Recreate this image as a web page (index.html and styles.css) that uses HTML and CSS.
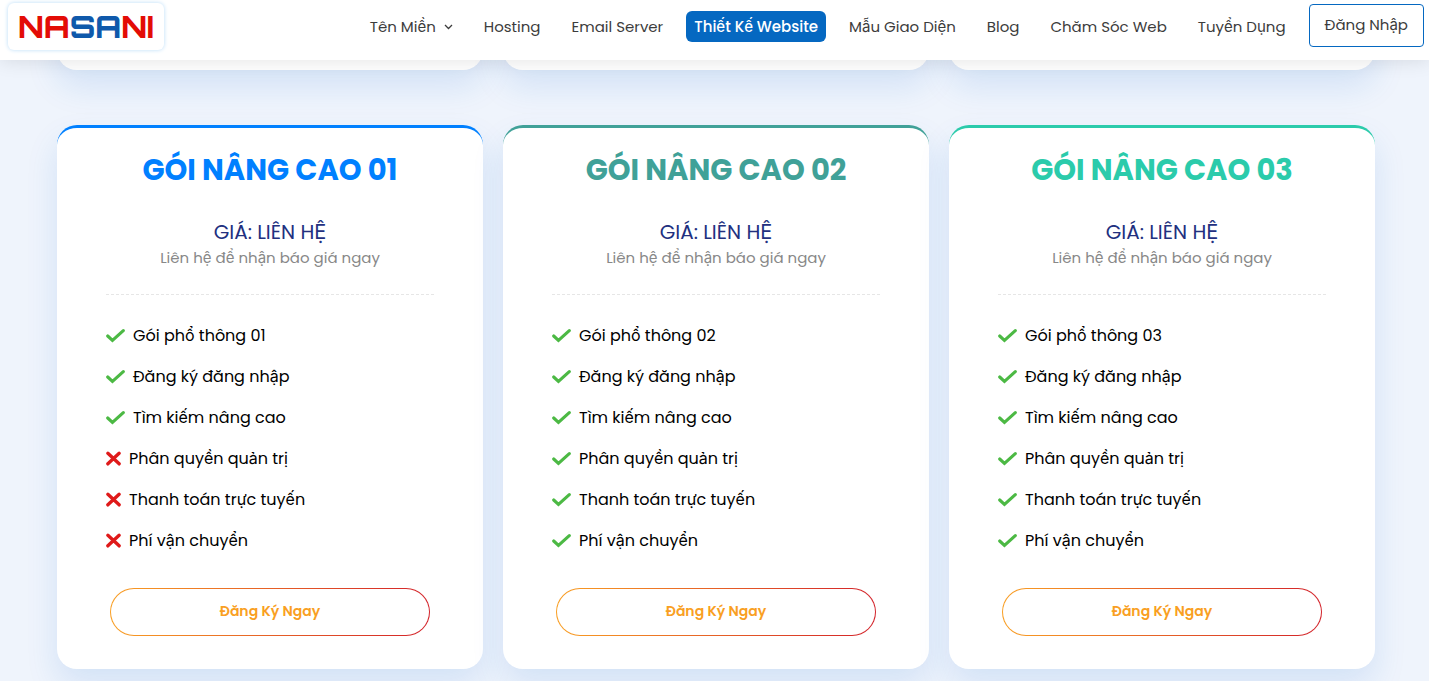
FILE: index.html
```html
<!DOCTYPE html>
<html lang="vi">
<head>
  <meta charset="UTF-8">
  <meta name="viewport" content="width=device-width, initial-scale=1.0">
  <title>Thiết Kế Website - NASANI</title>
  <link rel="stylesheet" href="styles.css">
</head>
<body>
  <svg class="sprite" aria-hidden="true">
    <symbol id="check" viewBox="0 0 20 15"><path d="M1.800 8l5 4.600L18.200 2.400" fill="none" stroke="#4cb944" stroke-width="3.300" stroke-linecap="round"/></symbol>
    <symbol id="cross" viewBox="0 0 16 15"><path d="M2 2l12 11.200M14 2L2 13.200" fill="none" stroke="#df1a1a" stroke-width="3.600" stroke-linecap="round"/></symbol>
  </svg>

  <header class="header">
    <a href="#" class="logo"><span class="red">NA</span><span class="blue">SA</span><span class="red">NI</span></a>
    <nav class="menu">
      <a href="#" class="menu-link">Tên Miền
        <svg class="arrow" viewBox="0 0 9 6"><path d="M1 1l3.500 3.500L8 1" fill="none" stroke="currentColor" stroke-width="1.300"/></svg>
      </a>
      <a href="#" class="menu-link">Hosting</a>
      <a href="#" class="menu-link">Email Server</a>
      <a href="#" class="menu-link active">Thiết Kế Website</a>
      <a href="#" class="menu-link">Mẫu Giao Diện</a>
      <a href="#" class="menu-link">Blog</a>
      <a href="#" class="menu-link">Chăm Sóc Web</a>
      <a href="#" class="menu-link">Tuyển Dụng</a>
      <a href="#" class="login">Đăng Nhập</a>
    </nav>
  </header>

  <main class="pricing">
    <div class="card-end"></div>
    <div class="card-end"></div>
    <div class="card-end"></div>

    <article class="card blue-card">
      <h2>GÓI NÂNG CAO 01</h2>
      <p class="price">GIÁ: LIÊN HỆ</p>
      <p class="note">Liên hệ để nhận báo giá ngay</p>
      <ul class="features">
        <li><svg class="check"><use href="#check"/></svg>Gói phổ thông 01</li>
        <li><svg class="check"><use href="#check"/></svg>Đăng ký đăng nhập</li>
        <li><svg class="check"><use href="#check"/></svg>Tìm kiếm nâng cao</li>
        <li><svg class="cross"><use href="#cross"/></svg>Phân quyền quản trị</li>
        <li><svg class="cross"><use href="#cross"/></svg>Thanh toán trực tuyến</li>
        <li><svg class="cross"><use href="#cross"/></svg>Phí vận chuyển</li>
      </ul>
      <a href="#" class="btn">Đăng Ký Ngay</a>
    </article>

    <article class="card teal-card">
      <h2>GÓI NÂNG CAO 02</h2>
      <p class="price">GIÁ: LIÊN HỆ</p>
      <p class="note">Liên hệ để nhận báo giá ngay</p>
      <ul class="features">
        <li><svg class="check"><use href="#check"/></svg>Gói phổ thông 02</li>
        <li><svg class="check"><use href="#check"/></svg>Đăng ký đăng nhập</li>
        <li><svg class="check"><use href="#check"/></svg>Tìm kiếm nâng cao</li>
        <li><svg class="check"><use href="#check"/></svg>Phân quyền quản trị</li>
        <li><svg class="check"><use href="#check"/></svg>Thanh toán trực tuyến</li>
        <li><svg class="check"><use href="#check"/></svg>Phí vận chuyển</li>
      </ul>
      <a href="#" class="btn">Đăng Ký Ngay</a>
    </article>

    <article class="card green-card">
      <h2>GÓI NÂNG CAO 03</h2>
      <p class="price">GIÁ: LIÊN HỆ</p>
      <p class="note">Liên hệ để nhận báo giá ngay</p>
      <ul class="features">
        <li><svg class="check"><use href="#check"/></svg>Gói phổ thông 03</li>
        <li><svg class="check"><use href="#check"/></svg>Đăng ký đăng nhập</li>
        <li><svg class="check"><use href="#check"/></svg>Tìm kiếm nâng cao</li>
        <li><svg class="check"><use href="#check"/></svg>Phân quyền quản trị</li>
        <li><svg class="check"><use href="#check"/></svg>Thanh toán trực tuyến</li>
        <li><svg class="check"><use href="#check"/></svg>Phí vận chuyển</li>
      </ul>
      <a href="#" class="btn">Đăng Ký Ngay</a>
    </article>
  </main>
</body>
</html>
```

FILE: styles.css
```css
*{margin:0;padding:0;box-sizing:border-box}
body{font-family:Poppins,Inter,sans-serif;font-size:16px;color:#000;background:#eff4fc}
a{text-decoration:none}
.sprite{display:none}

/* header */
.header{position:sticky;top:0;z-index:10;height:60px;display:flex;justify-content:space-between;align-items:flex-start;padding:3px 5px 0 8px;background:#fff;box-shadow:0 0 20px rgba(0,0,0,.12)}
.logo{height:47px;padding:0 10px;border-radius:6px;box-shadow:0 0 4px #b9dcf8;font-family:Orbitron,"DejaVu Sans",sans-serif;font-size:31px;font-weight:800;line-height:48px}
.red{color:#e30c06}
.blue{color:#0f59ab}
.menu{display:flex;align-items:flex-start;gap:15px;font-size:15px}
.menu-link{display:flex;align-items:center;gap:8px;height:31px;margin-top:8px;padding:0 8px;border-radius:6px;color:#3c3c3c;white-space:nowrap}
.menu-link.active{background:#0568c1;color:#fff;font-weight:500}
.arrow{width:9px;height:6px}
.login{height:43px;margin-top:1px;padding:0 15px;border:1px solid #0568c1;border-radius:4px;color:#3c3c3c;line-height:40px;white-space:nowrap}

/* pricing */
.pricing{display:grid;grid-template-columns:repeat(3,1fr);column-gap:20px;padding:0 54px 12px 57px}
.card,.card-end{background:#fff;border-radius:20px;box-shadow:0 16px 32px rgba(26,110,210,.13)}
.card-end{height:60px;margin:-50px 0 55px}
.card{padding:24px 49px 33px;border-top:3px solid;text-align:center}
.card h2{font-size:29px;line-height:36px}
.blue-card{border-color:#0080ff}
.blue-card h2{color:#0080ff}
.teal-card{border-color:#40a198}
.teal-card h2{color:#40a198}
.green-card{border-color:#2bcbab}
.green-card h2{color:#2bcbab}
.price{margin-top:29px;font-size:20px;line-height:30px;color:#22307f}
.note{padding-bottom:25px;border-bottom:1px dashed #e6e6e6;font-size:15px;line-height:22px;color:#888}
.features{list-style:none;margin:20px 0 27px;text-align:left}
.features li{display:flex;align-items:center;gap:8px;height:41px}
.check{width:19px;height:15px}
.cross{width:15px;height:15px}
.btn{display:block;height:48px;margin:0 4px;border:1px solid transparent;border-radius:24px;background:linear-gradient(#fff,#fff) padding-box,linear-gradient(90deg,#f99f23,#d3222a) border-box;color:#f99f23;font-size:14px;font-weight:600;line-height:45px}
```
